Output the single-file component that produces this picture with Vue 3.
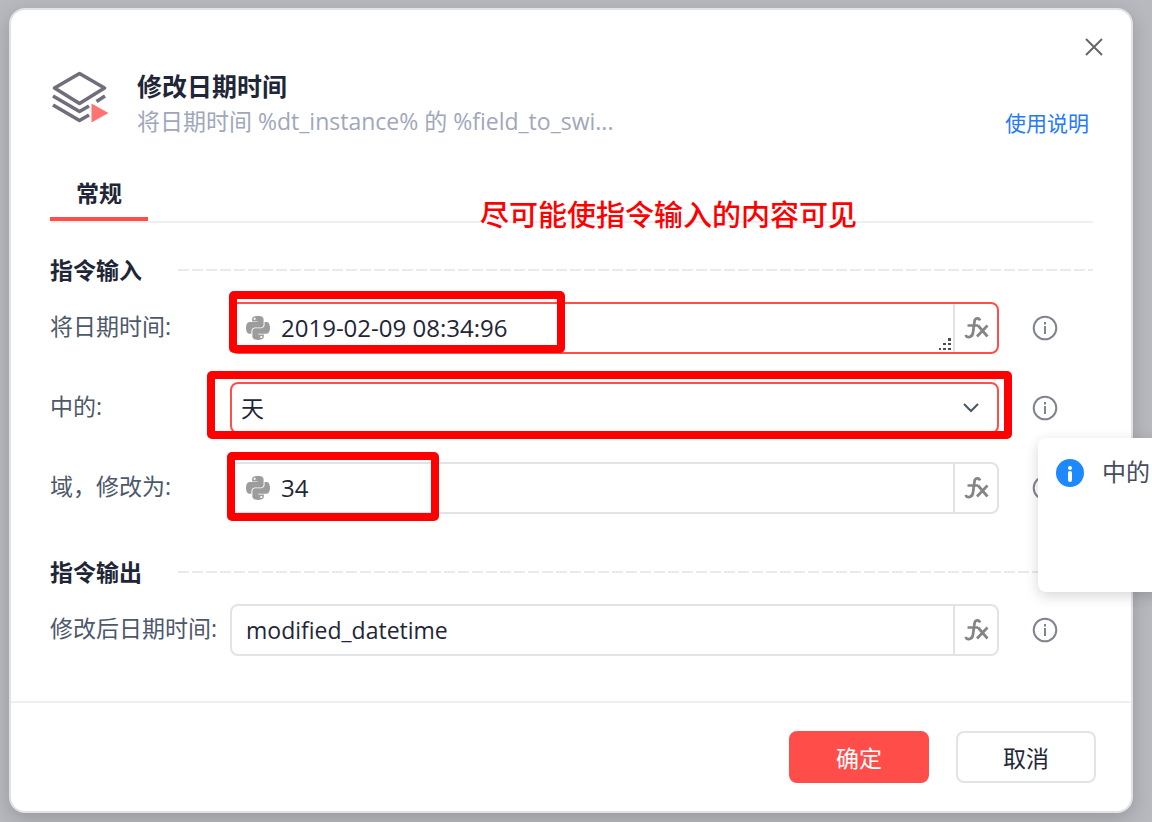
<template>
  <main class="backdrop">
    <section class="dialog" role="dialog" aria-labelledby="dialogTitle">
      <div class="closeBar">
        <button type="button" class="closeButton" aria-label="关闭">
          <svg viewBox="0 0 24 24" width="24" height="24">
            <path d="M4 4L20 20M20 4L4 20" fill="none" stroke="#66676b" stroke-width="2" />
          </svg>
        </button>
      </div>

      <header class="header">
        <svg class="headerIcon" viewBox="6 6 60 54" width="60" height="54">
          <g fill="none" stroke="#6f6e7a" stroke-width="3.600" stroke-linejoin="round">
            <path d="M10.500 24L35.500 9.500L60.500 24L35.500 39.500Z" />
            <path d="M9 32L35.500 47.500L45 42M52.500 37.500L61 32" />
            <path d="M9 41L35.500 56.500L45 51" />
          </g>
          <path d="M47.500 39.500L64.500 49L47.500 58.500Z" fill="#ff7370" />
        </svg>
        <div class="headerText">
          <h1 id="dialogTitle" class="title">修改日期时间</h1>
          <p class="subtitle">将日期时间 %dt_instance% 的 %field_to_swi...</p>
        </div>
        <a href="#" class="helpLink">使用说明</a>
      </header>

      <nav class="tabs">
        <button type="button" class="tab">常规</button>
        <p class="note">尽可能使指令输入的内容可见</p>
      </nav>

      <form class="form" @submit.prevent>
        <section v-for="group in groups" :key="group.title" class="group">
          <h2 class="groupTitle">{{ group.title }}</h2>
          <div v-for="field in group.fields" :key="field.id" class="row">
            <label :for="field.id" class="label">{{ field.label }}:</label>

            <div class="control" :class="{ invalid: field.invalid }">
              <template v-if="field.type === 'select'">
                <select :id="field.id" v-model="field.value" class="select">
                  <option v-for="unit in units" :key="unit">{{ unit }}</option>
                </select>
                <svg class="chevron" viewBox="0 0 16 10" width="16" height="10">
                  <path d="M1 1L8 8L15 1" fill="none" stroke="#4a5568" stroke-width="2" />
                </svg>
              </template>

              <template v-else>
                <svg v-if="field.python" class="python" viewBox="0 32 448 448" width="24" height="24">
                  <path fill="#9c9c9c" d="M439.8 200.5c-7.7-30.9-22.3-54.2-53.4-54.2h-40.1v47.4c0 36.8-31.2 67.8-66.8 67.8H172.7c-29.2 0-53.4 25-53.4 54.3v101.8c0 29 25.2 46 53.4 54.3 33.8 9.9 66.3 11.7 106.8 0 26.9-7.8 53.4-23.5 53.4-54.3v-40.7H226.2v-13.6h160.2c31.1 0 42.6-21.7 53.4-54.2 11.2-33.5 10.7-65.7 0-108.6zM286.2 404c11.1 0 20.1 9.1 20.1 20.3 0 11.3-9 20.4-20.1 20.4-11 0-20.1-9.2-20.1-20.4.1-11.3 9.1-20.3 20.1-20.3zM167.8 248.1h106.8c29.7 0 53.4-24.5 53.4-54.3V91.9c0-29-24.4-50.7-53.4-55.6-35.8-5.9-74.7-5.6-106.8.1-45.2 8-53.4 24.7-53.4 55.6v40.7h106.9v13.6h-147c-31.1 0-58.3 18.7-66.8 54.2-9.8 40.7-10.2 66.1 0 108.6 7.6 31.6 25.7 54.2 56.8 54.2H101v-48.8c0-35.3 30.5-66.4 66.8-66.4zm-6.7-142.6c-11.1 0-20.1-9.1-20.1-20.3.1-11.3 9-20.4 20.1-20.4 11 0 20.1 9.2 20.1 20.4s-9 20.3-20.1 20.3z" />
                </svg>
                <textarea v-if="field.type === 'textarea'" :id="field.id" v-model="field.value" class="input" rows="1"></textarea>
                <input v-else type="text" :id="field.id" v-model="field.value" class="input" />
                <svg v-if="field.type === 'textarea'" class="grip" viewBox="0 0 14 14" width="14" height="14">
                  <path d="M10 0h3v3h-3zM5 5h3v2h-3zM10 5h3v2h-3zM1 10h2v2h-2zM5 10h3v2h-3zM10 10h3v2h-3z" fill="#4d4d4d" />
                </svg>
                <button type="button" class="fxButton" aria-label="fx">
                  <svg viewBox="0 0 26 24" width="26" height="24">
                    <path d="M17 4.500C16 1.500 12 1.500 11.500 5.500L10 16.500C9.500 21.500 4 22.500 2.500 19M4.500 9.500H15M15 9.500L24.500 20.500M24.500 9.500L14 20.500" fill="none" stroke="#858585" stroke-width="2.700" />
                  </svg>
                </button>
              </template>

              <span v-if="field.mark" class="mark" :class="field.mark"></span>
            </div>

            <button type="button" class="infoButton" :aria-label="field.label">
              <svg viewBox="0 0 26 26" width="26" height="26">
                <circle cx="13" cy="13" r="11.300" fill="none" stroke="#80848e" stroke-width="2" />
                <path d="M12 7h2v2.500h-2zM12 11h2v8h-2z" fill="#80848e" />
              </svg>
            </button>
          </div>
        </section>
      </form>

      <footer class="footer">
        <button type="button" class="button primary">确定</button>
        <button type="button" class="button">取消</button>
      </footer>
    </section>

    <aside class="toast" role="status">
      <svg class="toastIcon" viewBox="0 0 28 28" width="28" height="28">
        <circle cx="14" cy="14" r="14" fill="#1e88ff" />
        <circle cx="14" cy="9" r="2" fill="#fff" />
        <path d="M14 14V21" stroke="#fff" stroke-width="4" stroke-linecap="round" />
      </svg>
      <span>中的</span>
    </aside>
  </main>
</template>

<script setup>
import { ref } from 'vue'

const units = ['年', '月', '天', '小时', '分钟', '秒']

const groups = ref([
  {
    title: '指令输入',
    fields: [
      { id: 'datetime', label: '将日期时间', type: 'textarea', value: '2019-02-09 08:34:96', python: true, invalid: true, mark: 'markDate' },
      { id: 'unit', label: '中的', type: 'select', value: '天', invalid: true, mark: 'markUnit' },
      { id: 'amount', label: '域，修改为', type: 'text', value: '34', python: true, mark: 'markAmount' }
    ]
  },
  {
    title: '指令输出',
    fields: [
      { id: 'result', label: '修改后日期时间', type: 'text', value: 'modified_datetime' }
    ]
  }
])
</script>

<style>
body {
  margin: 0;
  background: #b8b9be;
}
</style>

<style scoped>
.backdrop {
  position: relative;
  box-sizing: border-box;
  min-height: 100vh;
  padding: 8px 19px 9px 9px;
  overflow: hidden;
  color: #1f2637;
  font-family: "Open Sans", "Noto Sans CJK SC", sans-serif;
  font-size: 23px;
}

button,
input,
textarea,
select {
  margin: 0;
  padding: 0;
  border: 0;
  background: none;
  color: inherit;
  font: inherit;
}

button {
  cursor: pointer;
}

svg {
  display: block;
  flex: none;
}

.dialog {
  border: 2px solid #e1e2e7;
  border-radius: 16px;
  background: #fff;
  box-shadow: 0 6px 20px rgb(0 0 0 / 18%);
}

.closeBar {
  display: flex;
  justify-content: flex-end;
  padding: 25px 25px 11px;
}

.header {
  display: flex;
  align-items: flex-start;
  padding: 0 42px 0 39px;
}

.headerText {
  flex: 1;
  min-width: 0;
  margin-left: 27px;
}

.title {
  margin: 0;
  font-size: 25px;
  font-weight: 700;
  line-height: 32px;
}

.subtitle {
  margin: 0;
  color: #a0a7bb;
  line-height: 38px;
}

.helpLink {
  align-self: flex-end;
  color: #2479ff;
  font-size: 21px;
  line-height: 34px;
  text-decoration: none;
}

.tabs {
  position: relative;
  margin: 30px 38px 0 39px;
  border-bottom: 2px solid #eeeff4;
}

.tab {
  display: block;
  padding: 0 26px;
  border-bottom: 4px solid #ff4d4a;
  font-weight: 700;
  line-height: 47px;
}

/* Remarque posée sur la ligne des onglets */
.note {
  position: absolute;
  top: 25px;
  left: 430px;
  margin: 0;
  color: #f00;
  font-size: 29px;
  font-weight: 500;
  line-height: 40px;
  white-space: nowrap;
}

.form {
  padding: 31px 38px 45px 39px;
}

.group + .group {
  margin-top: 42px;
}

.groupTitle {
  display: flex;
  align-items: center;
  gap: 36px;
  margin: 0 0 16px;
  font-size: 23px;
  font-weight: 700;
  line-height: 32px;
}

.groupTitle::after {
  content: "";
  flex: 1;
  height: 2px;
  background: repeating-linear-gradient(90deg, #e9eaef 0 11px, transparent 11px 14px);
}

.row {
  display: grid;
  grid-template-columns: 180px 1fr 94px;
  align-items: center;
}

.row + .row {
  margin-top: 28px;
}

.label {
  padding-bottom: 4px;
  color: #4e586b;
  line-height: 32px;
  white-space: nowrap;
}

.control {
  position: relative;
  display: flex;
  align-items: center;
  box-sizing: border-box;
  height: 52px;
  border: 2px solid #e2e3e9;
  border-radius: 8px;
}

.control.invalid {
  border-color: #ff4d4a;
}

.python {
  margin-left: 14px;
}

.input {
  flex: 1;
  min-width: 0;
  height: 32px;
  padding-left: 14px;
  line-height: 32px;
  resize: none;
  overflow: hidden;
  outline: none;
}

.python + .input {
  padding-left: 11px;
  font-size: 24px;
}

.grip {
  align-self: flex-end;
  margin-right: 1px;
}

.fxButton {
  display: flex;
  align-self: stretch;
  align-items: center;
  justify-content: center;
  width: 44px;
  border-left: 2px solid #e2e3e9;
}

.select {
  flex: 1;
  height: 100%;
  padding-left: 9px;
  appearance: none;
  outline: none;
}

.chevron {
  margin-right: 18px;
  pointer-events: none;
}

.infoButton {
  justify-self: start;
  margin-left: 33px;
}

/* Cadres rouges autour des valeurs saisies */
.mark {
  position: absolute;
  box-sizing: border-box;
  border: 8px solid #f00;
  border-radius: 5px;
  pointer-events: none;
}

.markDate {
  top: -13px;
  bottom: -1px;
  left: -3px;
  width: 336px;
}

.markUnit {
  top: -13px;
  right: -15px;
  bottom: -7px;
  left: -25px;
}

.markAmount {
  top: -12px;
  bottom: -9px;
  left: -5px;
  width: 212px;
}

.footer {
  display: flex;
  justify-content: flex-end;
  gap: 27px;
  padding: 28px 35px;
  border-top: 2px solid #eeeff4;
}

.button {
  box-sizing: border-box;
  width: 140px;
  height: 52px;
  border: 2px solid #e2e3e9;
  border-radius: 8px;
}

.button.primary {
  border-color: #ff4d4a;
  background: #ff4d4a;
  color: #fff;
}

/* Notification qui entre par le bord droit */
.toast {
  position: absolute;
  top: 438px;
  left: calc(100% - 114px);
  display: flex;
  align-items: flex-start;
  gap: 18px;
  box-sizing: border-box;
  width: 420px;
  height: 154px;
  padding: 18px;
  border-radius: 8px;
  background: #fff;
  box-shadow: 0 4px 14px rgb(0 0 0 / 16%);
  color: #464c5b;
  font-size: 24px;
  line-height: 32px;
}

.toastIcon {
  margin-top: 3px;
}
</style>
